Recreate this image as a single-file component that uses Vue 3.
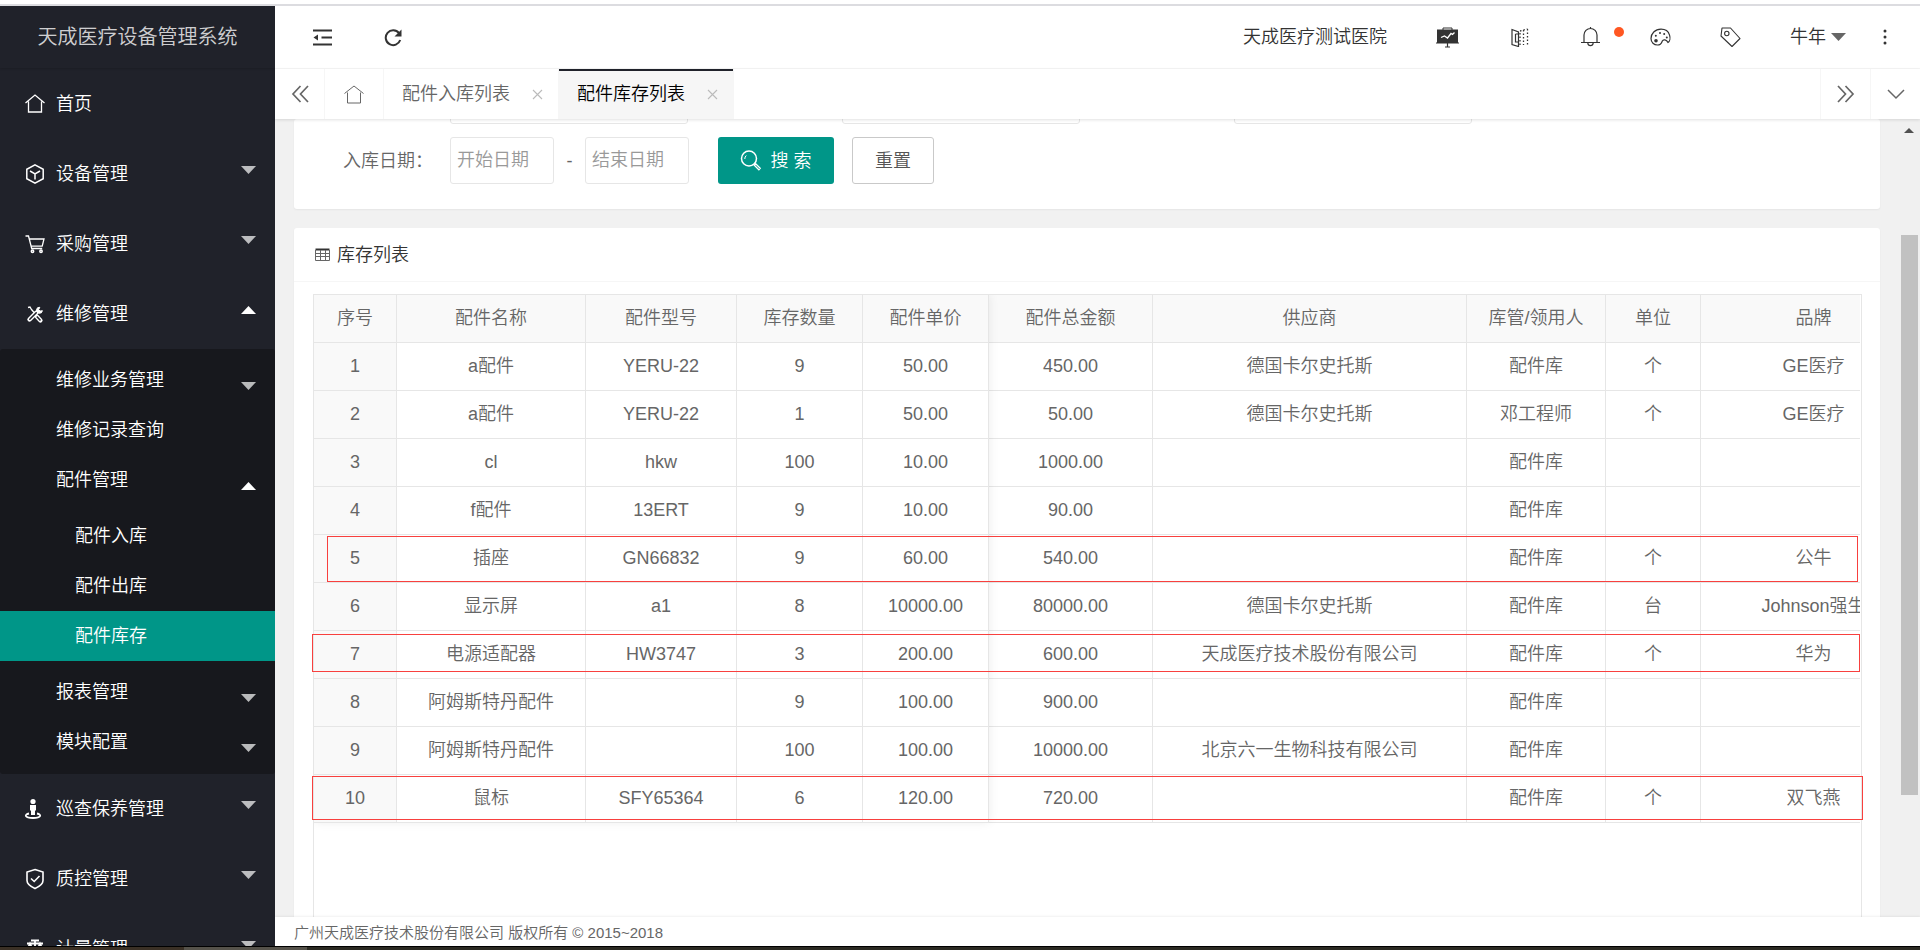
<script setup>
const icons = {
  home: '<path d="M1.500 10 11 2l9.500 8M4.500 8.500v10.500h13V8.500" stroke-width="1.300"/>',
  cube: '<path d="M11 1.800 19.200 6.300v9.400L11 20.200 2.800 15.700V6.300z"/><path d="M6 8 11 11l5-3M11 11v5.500"/>',
  cart: '<path d="M1.500 3h3l3.200 12.500h10.500M5.500 6h14.500l-1.800 7.200H7.500" stroke-width="1.300"/><circle cx="8.500" cy="18.200" r="1.200"/><circle cx="17" cy="18.200" r="1.200"/>',
  tools: '<path d="M4 4.500 6 4l1.500 2.500L15 15" stroke-width="1.300"/><path d="m12.800 13.500 3.700 4" stroke-width="4.200" stroke-linecap="round"/><path d="m12.800 13.500 3.700 4" stroke="#20222a" stroke-width="1.600"/><path d="m5.500 16.500 7-7" stroke-width="4.400" stroke-linecap="round"/><path d="m5.800 16.200 6.700-6.700" stroke="#20222a" stroke-width="1.600" stroke-linecap="round"/><path d="M15.800 4.300a3 3 0 1 0 2.600 3.400l-2.400.4-1.300-1.500z" fill="currentColor" stroke-width="1"/>',
  person: '<circle cx="9" cy="3.500" r="2.600" fill="currentColor" stroke="none"/><path d="M6 7h6v5l-1 1v4H7v-4l-1-1z" fill="currentColor" stroke="none"/><path d="M5 15.500c-5 1-4.500 4.500 4 4.500s9-3.500 4-4.500" stroke-width="1.800"/>',
  shield: '<path d="m11 1.500 8 2.500v8.500c0 3-3.500 6-8 8-4.500-2-8-5-8-8V4z" stroke-width="1.600"/><path d="m7 10.500 3.200 3L15.500 8" stroke-width="1.600"/>',
  scale: '<path d="M7 2.500h8M3 5.500h16M11 3v16M6 5.500l-3 7h6zM16 5.500l-3 7h6zM6 19.500h10" stroke-width="1.800"/>',
  fold: '<path d="M1 2.500h19M9.500 9.500H20M1 16.500h19" stroke-width="2"/><path d="M6 6.500v6l-4.500-3z" fill="currentColor" stroke="none"/>',
  refresh: '<path d="M16 5.200A7.400 7.400 0 1 0 17.200 12" stroke-width="2"/><path d="M18.500 1.500v7H11.500z" fill="currentColor" stroke="none"/>',
  board: '<path d="M7 3V1h9v2" stroke-width="1"/><path d="M1 2.500h21V16H1z" fill="currentColor" stroke="none"/><path d="M0 16h23M11.500 16v4M9 20h5" stroke-width="1.200"/><path d="m5 10.500 3.500-1.500 3 2 3.500-4.500 1.500 1 2-2" stroke="#fff" stroke-width="1.300"/>',
  map: '<path d="M1 1.500 7.500 4v14.500L1 16.500zM4.500 6v8h3.500M4.500 6H8" stroke-width="1.200"/><path d="M9 5v13M9 3 16.500 1M12.500 2v15M16.500 1v17" stroke-width="1.300" stroke-dasharray="1.500 2"/>',
  bell: '<path d="M0 15.500h19M3 15.500V8a6.500 6.500 0 0 1 13 0v7.500M9.500 1.800V0M6.800 16c.3 3.600 5 3.600 5.400 0" stroke-width="1.200"/>',
  palette: '<path d="M11 1.200C5 1.200 1 5.500 1 10.500c0 4 3 6.500 6.500 6.500 3.800 0 4-2 4.800-4 1-2 4.200-1.500 5.700 1.500 3.500-2 3-13.300-7-13.300z" stroke-width="1.200"/><circle cx="6" cy="12.800" r="1.800" fill="currentColor" stroke="none"/><circle cx="5.800" cy="7.800" r="1" fill="currentColor" stroke="none"/><circle cx="10" cy="4.900" r="1" fill="currentColor" stroke="none"/><circle cx="14.200" cy="6" r="1" fill="currentColor" stroke="none"/><circle cx="16.800" cy="9.500" r="1" fill="currentColor" stroke="none"/>',
  tag: '<path d="M2 1h8.500l9.500 10.500-8 8L1 9z" stroke-width="1.100" stroke-linejoin="round"/><circle cx="6.800" cy="6.500" r="2.200" stroke-width="1.100"/>',
  dots: '<circle cx="2" cy="2" r="1.500"/><circle cx="2" cy="8" r="1.500"/><circle cx="2" cy="14" r="1.500"/>',
  left: '<path d="M9.500 1 2 9l7.500 8M17 1 9.500 9l7.500 8" stroke-width="1.700"/>',
  right: '<path d="M1 1l7.500 8L1 17M8.500 1 16 9l-7.500 8" stroke-width="1.700"/>',
  down: '<path d="m1 1 8 8 8-8" stroke-width="1.500"/>',
  house: '<path d="M.5 8.500 10 1l9.500 7.500M3.500 7.500V18h13V7.500" stroke-width="1"/>',
  close: '<path d="m1 1 9 9M10 1l-9 9" stroke-width="1.100"/>',
  search: '<ellipse cx="9" cy="8.500" rx="7.500" ry="7.500" stroke-width="1.500"/><path d="M4.800 9a4.300 4.300 0 0 1 1.500-3.500" stroke-width="1"/><path d="m14.500 14 5.500 5.500" stroke-width="3.200"/><path d="m15.500 15 4 4" stroke="#009688" stroke-width="1"/>',
  grid: '<path d="M.5 1.500h14" stroke-width="2"/><path d="M.5 2v10.500h14V2M.5 5.500h14M.5 8.500h14M5.500 2v10.500M10.500 2v10.500" stroke-width="1" stroke="#666"/>',
}

const topMenu = [
  { label: '首页', icon: 'home' },
  { label: '设备管理', icon: 'cube', arrow: true },
  { label: '采购管理', icon: 'cart', arrow: true },
  { label: '维修管理', icon: 'tools', arrow: true, open: true },
]
const subMenu = [
  { label: '维修业务管理', arrow: true },
  { label: '维修记录查询' },
  { label: '配件管理', arrow: true, open: true, children: ['配件入库', '配件出库', '配件库存'] },
  { label: '报表管理', arrow: true },
  { label: '模块配置', arrow: true },
]
const bottomMenu = [
  { label: '巡查保养管理', icon: 'person', arrow: true },
  { label: '质控管理', icon: 'shield', arrow: true },
  { label: '计量管理', icon: 'scale', arrow: true },
]
const columns = ['序号', '配件名称', '配件型号', '库存数量', '配件单价', '配件总金额', '供应商', '库管/领用人', '单位', '品牌']
const rows = [
  ['1', 'a配件', 'YERU-22', '9', '50.00', '450.00', '德国卡尔史托斯', '配件库', '个', 'GE医疗'],
  ['2', 'a配件', 'YERU-22', '1', '50.00', '50.00', '德国卡尔史托斯', '邓工程师', '个', 'GE医疗'],
  ['3', 'cl', 'hkw', '100', '10.00', '1000.00', '', '配件库', '', ''],
  ['4', 'f配件', '13ERT', '9', '10.00', '90.00', '', '配件库', '', ''],
  ['5', '插座', 'GN66832', '9', '60.00', '540.00', '', '配件库', '个', '公牛'],
  ['6', '显示屏', 'a1', '8', '10000.00', '80000.00', '德国卡尔史托斯', '配件库', '台', 'Johnson强生'],
  ['7', '电源适配器', 'HW3747', '3', '200.00', '600.00', '天成医疗技术股份有限公司', '配件库', '个', '华为'],
  ['8', '阿姆斯特丹配件', '', '9', '100.00', '900.00', '', '配件库', '', ''],
  ['9', '阿姆斯特丹配件', '', '100', '100.00', '10000.00', '北京六一生物科技有限公司', '配件库', '', ''],
  ['10', '鼠标', 'SFY65364', '6', '120.00', '720.00', '', '配件库', '个', '双飞燕'],
]
</script>

<template>
  <div class="page" lang="zh-CN">
    <div class="window-edge"></div>
    <div class="app">
      <aside class="side">
        <div class="brand">天成医疗设备管理系统</div>
        <nav class="menu">
          <a v-for="m in topMenu" :key="m.label" href="#" class="item">
            <svg class="icon" width="22" height="22" viewBox="0 0 22 22" v-html="icons[m.icon]"></svg>
            <span>{{ m.label }}</span>
            <i v-if="m.arrow" class="arrow" :class="{ up: m.open }"></i>
          </a>
          <div class="sub">
            <template v-for="s in subMenu" :key="s.label">
              <a href="#" class="sub-item">
                <span>{{ s.label }}</span>
                <i v-if="s.arrow" class="arrow" :class="{ up: s.open }"></i>
              </a>
              <div v-if="s.children" class="leafs">
                <a v-for="c in s.children" :key="c" href="#" class="leaf" :class="{ active: c === '配件库存' }">{{ c }}</a>
              </div>
            </template>
          </div>
          <a v-for="m in bottomMenu" :key="m.label" href="#" class="item">
            <svg class="icon" width="22" height="22" viewBox="0 0 22 22" v-html="icons[m.icon]"></svg>
            <span>{{ m.label }}</span>
            <i class="arrow"></i>
          </a>
        </nav>
      </aside>

      <div class="main">
        <header class="header">
          <button class="tool first" aria-label="折叠菜单"><svg width="21" height="19" viewBox="0 0 21 19" v-html="icons.fold"></svg></button>
          <button class="tool" aria-label="刷新"><svg width="19" height="19" viewBox="0 0 19 19" v-html="icons.refresh"></svg></button>
          <span class="grow"></span>
          <a href="#" class="hospital">天成医疗测试医院</a>
          <button class="tool board" aria-label="看板"><svg width="23" height="21" viewBox="0 0 23 21" v-html="icons.board"></svg></button>
          <button class="tool" aria-label="地图"><svg width="18" height="19" viewBox="0 0 18 19" v-html="icons.map"></svg></button>
          <button class="tool" aria-label="消息"><svg width="19" height="20" viewBox="0 0 19 20" v-html="icons.bell"></svg><i class="dot"></i></button>
          <button class="tool" aria-label="主题"><svg width="21" height="18" viewBox="0 0 21 18" v-html="icons.palette"></svg></button>
          <button class="tool" aria-label="便签"><svg width="21" height="20" viewBox="0 0 21 20" v-html="icons.tag"></svg></button>
          <button class="user">牛年<i class="caret"></i></button>
          <button class="more" aria-label="更多"><svg class="solid" width="4" height="16" viewBox="0 0 4 16" v-html="icons.dots"></svg></button>
        </header>

        <div class="tabs">
          <button class="tab-ctl" aria-label="向左"><svg width="18" height="18" viewBox="0 0 18 18" v-html="icons.left"></svg></button>
          <button class="tab-home" aria-label="首页"><svg width="20" height="19" viewBox="0 0 20 19" v-html="icons.house"></svg></button>
          <div class="tab"><a href="#">配件入库列表</a><button aria-label="关闭配件入库列表"><svg width="11" height="11" viewBox="0 0 11 11" v-html="icons.close"></svg></button></div>
          <div class="tab current"><a href="#">配件库存列表</a><button aria-label="关闭配件库存列表"><svg width="11" height="11" viewBox="0 0 11 11" v-html="icons.close"></svg></button></div>
          <span class="grow"></span>
          <button class="tab-ctl r" aria-label="向右"><svg width="18" height="18" viewBox="0 0 18 18" v-html="icons.right"></svg></button>
          <button class="tab-ctl r" aria-label="更多标签"><svg width="18" height="11" viewBox="0 0 18 11" v-html="icons.down"></svg></button>
        </div>

        <div class="body">
          <div class="content">
            <form class="card search" @submit.prevent>
              <div class="filters">
                <input type="text" aria-label="配件名称">
                <input type="text" aria-label="配件型号">
                <input type="text" aria-label="供应商">
              </div>
              <div class="dates">
                <label for="date-start">入库日期：</label>
                <input id="date-start" class="date" type="text" placeholder="开始日期">
                <span class="dash">-</span>
                <input class="date" type="text" placeholder="结束日期" aria-label="结束日期">
                <button class="btn primary" type="submit"><svg width="22" height="22" viewBox="0 0 22 22" v-html="icons.search"></svg><span>搜 索</span></button>
                <button class="btn" type="reset">重置</button>
              </div>
            </form>

            <section class="card list">
              <h2 class="card-head"><svg width="15" height="13" viewBox="0 0 15 13" v-html="icons.grid"></svg>库存列表</h2>
              <div class="card-body">
                <div class="table-box">
                  <div class="clip">
                    <table>
                      <colgroup><col v-for="(c, i) in columns" :key="c" :class="'c' + i"></colgroup>
                      <thead><tr><th v-for="c in columns" :key="c" scope="col">{{ c }}</th></tr></thead>
                      <tbody>
                        <tr v-for="r in rows" :key="r[0]"><td v-for="(v, i) in r" :key="i">{{ v }}</td></tr>
                      </tbody>
                    </table>
                    <div class="fixed-shadow"></div>
                  </div>
                  <div class="mark m5"></div>
                  <div class="mark m7"></div>
                  <div class="mark m10"></div>
                </div>
              </div>
            </section>
          </div>
          <div class="scrollbar"><i class="sb-up"></i><i class="sb-thumb"></i></div>
        </div>

        <footer class="footer">广州天成医疗技术股份有限公司 版权所有 © 2015~2018</footer>
      </div>
    </div>
    <div class="taskbar"></div>
  </div>
</template>

<style>
body { margin: 0; overflow: hidden; }
</style>

<style scoped>
.page {
  height: 100vh; display: flex; flex-direction: column; overflow: hidden; background: #fff;
  font-family: "Liberation Sans", "Noto Sans CJK SC", sans-serif; font-size: 18px; font-weight: 350; line-height: 24px; color: #666;
}
.page *, .page *::before { box-sizing: border-box; }
button, input { font: inherit; color: inherit; margin: 0; padding: 0; border: 0; background: none; }
button { cursor: pointer; }
a { color: inherit; text-decoration: none; }
svg { display: block; flex: none; fill: none; stroke: currentColor; stroke-width: 1.500; }
svg.solid { fill: currentColor; stroke: none; }
.grow { flex: 1; }

.window-edge { flex: none; height: 6px; border-bottom: 2px solid #dcdce0; }
.app { flex: 1; min-height: 0; display: flex; }
.taskbar { flex: none; height: 4px; border-top: 1px solid #000; background: linear-gradient(90deg, #3a3025 184px, #55524a 184px 307px, #2b2a22 307px); }

.side { flex: none; width: 275px; display: flex; flex-direction: column; overflow: hidden; background: #20222a; color: #fff; }
.brand { flex: none; height: 62px; line-height: 63px; text-align: center; font-size: 20px; color: rgba(255, 255, 255, .8); box-shadow: 0 1px 2px rgba(0, 0, 0, .15); }
.menu { flex: 1; min-height: 0; padding-top: 1px; overflow: hidden; }
.item, .sub-item { display: flex; align-items: center; padding-right: 19px; }
.item { height: 70px; padding-left: 24px; }
.item .icon { margin-right: 10px; }
.arrow { width: 15px; height: 8px; margin-left: auto; background: rgba(255, 255, 255, .7); clip-path: polygon(0 0, 100% 0, 50% 100%); }
.arrow.up { background: #fff; clip-path: polygon(50% 0, 100% 100%, 0 100%); }
.item .arrow { margin-bottom: 8px; }
.sub { padding: 6px 0 7px; border-radius: 3px; background: #17181d; }
.sub-item { height: 50px; padding-left: 56px; }
.sub-item .arrow { margin-top: 12px; }
.leafs { padding: 6px 0; }
.leaf { display: block; height: 50px; line-height: 50px; padding-left: 75px; }
.leaf.active { background: #009688; }

.main { flex: 1; min-width: 0; display: flex; flex-direction: column; }
.header { flex: none; height: 63px; display: flex; align-items: center; padding-right: 12px; border-bottom: 1px solid #f6f6f6; color: #333; }
.tool { position: relative; flex: none; width: 70px; height: 62px; display: flex; align-items: center; justify-content: center; }
.tool.first { margin-left: 12px; }
.tool.board { width: 75px; }
.hospital { width: 190px; text-align: center; }
.dot { position: absolute; left: 59px; top: 21px; width: 10px; height: 10px; border-radius: 50%; background: #ff5722; }
.user { display: flex; align-items: center; width: 97px; padding-left: 25px; }
.caret { width: 15px; height: 8px; margin-left: 5px; background: #666; clip-path: polygon(0 0, 100% 0, 50% 100%); }
.more { width: 46px; display: flex; justify-content: center; }

.tabs { position: relative; z-index: 2; flex: none; height: 50px; display: flex; background: #fff; box-shadow: 0 1px 3px rgba(0, 0, 0, .12); }
.tab-ctl, .tab-home { display: flex; align-items: center; justify-content: center; border-right: 1px solid #f6f6f6; }
.tab-ctl { width: 50px; }
.tab-ctl.r { border-right: 0; border-left: 1px solid #f6f6f6; }
.tab-home { width: 59px; }
.tab { width: 175px; display: flex; align-items: center; padding-left: 18px; border-right: 1px solid #f6f6f6; }
.tab button { display: flex; margin-left: 22px; color: #bbb; }
.tab.current { background: #f6f6f6; color: #000; box-shadow: inset 0 2px #20222a; }

.body { flex: 1; min-height: 0; display: flex; overflow: hidden; background: #f1f1f1; }
.content { flex: 1; min-width: 0; padding: 0 20px 0 19px; }
.card { background: #fff; border-radius: 3px; box-shadow: 0 1px 2px rgba(0, 0, 0, .05); }
.search { margin-bottom: 19px; padding-bottom: 25px; }
.search input { height: 47px; border: 1px solid #e6e6e6; border-radius: 3px; background: #fff; }
.search input::placeholder { color: #999; opacity: 1; }
.filters { display: flex; align-items: flex-end; gap: 154px; height: 5px; margin-bottom: 13px; padding-left: 156px; overflow: hidden; }
.filters input { width: 238px; flex: none; }
.dates { display: flex; align-items: center; padding-left: 49px; }
.dates label { width: 107px; flex: none; }
.dates .date { width: 104px; padding: 0 6px; }
.dash { width: 31px; text-align: center; }
.btn { height: 47px; width: 82px; margin-left: 18px; border: 1px solid #c9c9c9; border-radius: 3px; color: #555; }
.btn.primary { display: flex; align-items: center; justify-content: center; gap: 8px; width: 116px; margin-left: 29px; border: 0; background: #009688; color: #fff; }

.list { height: 100%; }
.card-head { display: flex; align-items: center; gap: 7px; height: 54px; margin: 0; padding-left: 21px; border-bottom: 1px solid #f6f6f6; font-size: 18px; font-weight: inherit; color: #333; }
.card-body { height: 100%; padding: 12px 18px 0 19px; }
.table-box { position: relative; height: 100%; border: 1px solid #e6e6e6; }
.clip { position: relative; overflow: hidden; height: 100%; margin-right: 1px; }
table { width: 1613px; table-layout: fixed; border-collapse: separate; border-spacing: 0; }
th, td { height: 48px; padding: 0 0 2px; border-right: 1px solid #e6e6e6; border-bottom: 1px solid #e6e6e6; text-align: center; font-weight: inherit; white-space: nowrap; }
th, td:first-child { background: #f9f9f9; }
.c0 { width: 83px; }
.c1 { width: 189px; }
.c2 { width: 151px; }
.c3, .c4 { width: 126px; }
.c5 { width: 164px; }
.c6 { width: 314px; }
.c7 { width: 139px; }
.c8 { width: 95px; }
.c9 { width: 226px; }
.fixed-shadow { position: absolute; left: 0; top: 0; width: 675px; height: 528px; box-shadow: 0 -1px 10px rgba(0, 0, 0, .08); pointer-events: none; }
.mark { position: absolute; border: 1px solid #f8403e; pointer-events: none; }
.m5 { left: 13px; right: 3px; top: 241px; height: 46px; }
.m7 { left: -2px; right: 1px; top: 339px; height: 38px; }
.m10 { left: -2px; right: -2px; top: 481px; height: 44px; }

.scrollbar { flex: none; width: 20px; padding: 9px 2px 0 1px; background: #f0f0f0; }
.sb-up { display: block; width: 10px; height: 5px; margin-left: 3px; background: #505050; clip-path: polygon(50% 0, 100% 100%, 0 100%); }
.sb-thumb { display: block; height: 71%; margin-top: 102px; background: #c1c1c1; }
.footer { position: relative; z-index: 2; flex: none; height: 29px; line-height: 31px; padding-left: 19px; font-size: 15px; background: #fff; box-shadow: 0 -1px 2px rgba(0, 0, 0, .06); }
</style>
